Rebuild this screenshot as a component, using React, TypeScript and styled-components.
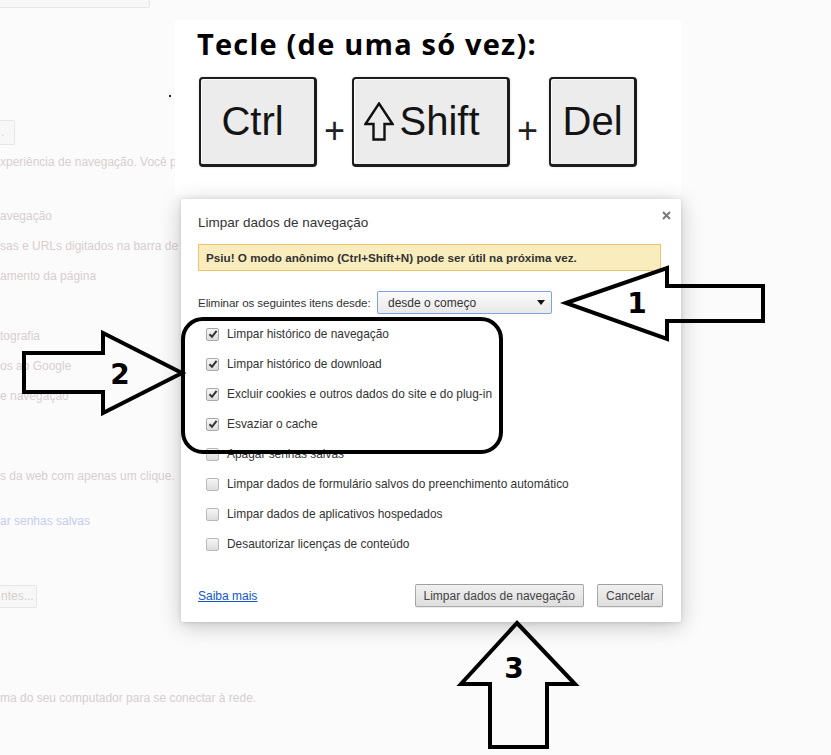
import * as React from 'react';
import styled, { createGlobalStyle } from 'styled-components';

const GlobalStyle = createGlobalStyle`
  html, body {
    margin: 0;
    padding: 0;
    background: #fbfbfb;
  }
  body {
    font-family: 'Liberation Sans', Arial, sans-serif;
  }
`;

const Page = styled.div`
  position: relative;
  display: flex;
  width: 831px;
  height: 755px;
  overflow: hidden;
  background: #fbfbfb;
`;

/* faded settings page behind the dialog */
const Backdrop = styled.div`
  display: flex;
  flex-direction: column;
  align-items: flex-start;
  width: 175px;
  flex: none;
  font-size: 12px;
  white-space: nowrap;
`;
const FadedLine = styled.div<{ $top: number; $link?: boolean }>`
  margin-top: ${p => p.$top}px;
  line-height: 20px;
  color: ${p => (p.$link ? '#c5cdf2' : '#d8cece')};
`;
const FadedButton = styled.div<{ $top: number; $width: number; $height: number; $cut?: boolean }>`
  margin-top: ${p => p.$top}px;
  width: ${p => p.$width}px;
  height: ${p => p.$height}px;
  box-sizing: border-box;
  border: 1px solid #e6e6e6;
  border-left: none;
  border-top: ${p => (p.$cut ? 'none' : '1px solid #e6e6e6')};
  border-radius: 0 2px 2px 0;
  background: #f7f7f7;
  color: #d8cece;
  font-size: 12px;
  line-height: ${p => p.$height - 2}px;
  padding-left: 1px;
`;

const Main = styled.div`
  position: relative;
  z-index: 1;
  display: flex;
  flex-direction: column;
  width: 506px;
  flex: none;
  padding-top: 20px;
`;
const Poster = styled.div`
  height: 175px;
  box-sizing: border-box;
  padding: 6px 0 0 22px;
  background: #fff;
`;
const Headline = styled.h1`
  margin: 0;
  font-family: 'Open Sans', 'Noto Sans', sans-serif;
  font-weight: 700;
  font-size: 29px;
  letter-spacing: 1.2px;
  line-height: 36px;
  white-space: nowrap;
  color: #000;
`;
const KeyRow = styled.div`
  display: flex;
  align-items: center;
  height: 90px;
  margin: 15px 0 0 2px;
`;
const Key = styled.div<{ $width: number; $shift?: number }>`
  display: flex;
  align-items: center;
  justify-content: center;
  gap: 6px;
  width: ${p => p.$width}px;
  height: 90px;
  box-sizing: border-box;
  padding-right: ${p => p.$shift ?? 0}px;
  border: 2px solid #1c1c1c;
  border-right-width: 3px;
  border-bottom-width: 3px;
  border-radius: 4px;
  background: #ececec;
  box-shadow: inset 1px 1px 0 #fbfbfb, 0 0 3px rgba(0, 0, 0, 0.12);
  font-family: 'Liberation Sans', Arial, sans-serif;
  font-size: 40px;
  color: #141414;
`;
const Plus = styled.span<{ $left: number; $right: number }>`
  margin: 18px ${p => p.$right}px 0 ${p => p.$left}px;
  font-family: 'Liberation Sans', Arial, sans-serif;
  font-weight: 300;
  font-size: 36px;
  line-height: 36px;
  color: #222;
`;

const Dialog = styled.div`
  display: flex;
  flex-direction: column;
  width: 500px;
  height: 423px;
  margin: 4px 0 0 6px;
  box-sizing: border-box;
  padding: 15px 20px 15px 17px;
  background: #fff;
  border-radius: 2px;
  box-shadow: 0 4px 22px rgba(0, 0, 0, 0.22), 0 1px 4px rgba(0, 0, 0, 0.12);
  color: #333;
  font-size: 12px;
`;
const Header = styled.div`
  display: flex;
  justify-content: space-between;
  align-items: flex-start;
  height: 18px;
`;
const Title = styled.div`
  font-size: 13.5px;
  line-height: 18px;
  color: #333;
`;
const Close = styled.button`
  margin: -3px -10px 0 0;
  padding: 0;
  width: 9px;
  height: 9px;
  border: none;
  background: none;
  display: flex;
`;
const Notice = styled.div`
  margin-top: 12px;
  height: 27px;
  box-sizing: border-box;
  padding: 0 7px;
  border: 1px solid #f0c36d;
  background: #f9edbe;
  font-weight: 700;
  font-size: 11.7px;
  line-height: 25px;
  white-space: nowrap;
  color: #333;
`;
const RangeRow = styled.div`
  display: flex;
  align-items: center;
  margin-top: 20px;
  height: 23px;
`;
const RangeLabel = styled.span`
  width: 179px;
  flex: none;
  font-size: 11.6px;
  letter-spacing: -0.1px;
  white-space: nowrap;
`;
const Select = styled.div`
  display: flex;
  align-items: center;
  justify-content: space-between;
  width: 175px;
  height: 23px;
  box-sizing: border-box;
  padding: 0 6px 0 10px;
  border: 1px solid #7da3e4;
  border-radius: 2px;
  background: linear-gradient(#fbfbfb, #e9e9e9);
  color: #333;
`;
const Caret = styled.span`
  width: 0;
  height: 0;
  border-left: 4.5px solid transparent;
  border-right: 4.5px solid transparent;
  border-top: 5px solid #111;
`;
const List = styled.div`
  display: flex;
  flex-direction: column;
  margin-top: 5px;
`;
const Option = styled.label`
  display: flex;
  align-items: center;
  gap: 8px;
  height: 30px;
  padding-left: 8px;
  font-size: 11.9px;
  white-space: nowrap;
  color: #333;
`;
const Box = styled.span<{ $checked: boolean }>`
  display: flex;
  align-items: center;
  justify-content: center;
  flex: none;
  width: 13px;
  height: 13px;
  box-sizing: border-box;
  border: 1px solid ${p => (p.$checked ? '#a9a9a9' : '#b9b9b9')};
  border-radius: 2px;
  background: linear-gradient(#f6f6f6, #dcdcdc);
`;
const Footer = styled.div`
  display: flex;
  align-items: center;
  gap: 13px;
  margin: 25px -2px 0 0;
  height: 23px;
`;
const Link = styled.a`
  margin-right: auto;
  color: #1155cc;
  text-decoration: underline;
`;
const Button = styled.button`
  height: 23px;
  padding: 0 8px;
  border: 1px solid rgba(0, 0, 0, 0.28);
  border-radius: 2px;
  background: linear-gradient(#f0f0f0, #dedede);
  box-shadow: 0 1px 0 rgba(0, 0, 0, 0.08);
  font-family: 'Liberation Sans', Arial, sans-serif;
  font-size: 12px;
  color: #444;
`;

const Annotations = styled.svg`
  position: absolute;
  left: 0;
  top: 0;
  z-index: 2;
  pointer-events: none;
`;
const Digit = styled.text`
  font-family: 'DejaVu Sans', sans-serif;
  font-weight: 700;
  font-size: 28px;
  fill: #000;
`;

const options = [
  { label: 'Limpar histórico de navegação', checked: true },
  { label: 'Limpar histórico de download', checked: true },
  { label: 'Excluir cookies e outros dados do site e do plug-in', checked: true },
  { label: 'Esvaziar o cache', checked: true },
  { label: 'Apagar senhas salvas', checked: false },
  { label: 'Limpar dados de formulário salvos do preenchimento automático', checked: false },
  { label: 'Limpar dados de aplicativos hospedados', checked: false },
  { label: 'Desautorizar licenças de conteúdo', checked: false },
];

const ShiftArrow = () => (
  <svg width="30" height="39" viewBox="0 0 30 39">
    <path d="M15 1.5 L28.5 22 L20.5 22 L20.5 37.5 L9.5 37.5 L9.5 22 L1.5 22 Z" fill="none" stroke="#111" strokeWidth="2.4" strokeLinejoin="miter" />
  </svg>
);

const Check = () => (
  <svg width="10" height="10" viewBox="0 0 10 10">
    <path d="M1.5 5.2 L4 7.8 L8.6 1.8" fill="none" stroke="#333" strokeWidth="2" />
  </svg>
);

export default function App() {
  return (
    <Page>
      <GlobalStyle />
      <Backdrop>
        <FadedButton $top={0} $width={150} $height={8} $cut />
        <FadedButton $top={112} $width={15} $height={25}>.</FadedButton>
        <FadedLine $top={7}>xperiência de navegação. Você po</FadedLine>
        <FadedLine $top={34}>avegação</FadedLine>
        <FadedLine $top={10}>sas e URLs digitados na barra de endereço</FadedLine>
        <FadedLine $top={10}>amento da página</FadedLine>
        <FadedLine $top={40}>tografia</FadedLine>
        <FadedLine $top={10}>os ao Google</FadedLine>
        <FadedLine $top={10}>e navegação</FadedLine>
        <FadedLine $top={60}>s da web com apenas um clique.</FadedLine>
        <FadedLine $top={25} $link>ar senhas salvas</FadedLine>
        <FadedButton $top={54} $width={37} $height={23}>ntes...</FadedButton>
        <FadedLine $top={80}>ma do seu computador para se conectar à rede.</FadedLine>
      </Backdrop>

      <Main>
        <Poster>
          <Headline>Tecle (de uma só vez):</Headline>
          <KeyRow>
            <Key $width={118} $shift={10}>Ctrl</Key>
            <Plus $left={7} $right={7}>+</Plus>
            <Key $width={158} $shift={18}>
              <ShiftArrow />
              Shift
            </Key>
            <Plus $left={7} $right={11}>+</Plus>
            <Key $width={88}>Del</Key>
          </KeyRow>
        </Poster>

        <Dialog>
          <Header>
            <Title>Limpar dados de navegação</Title>
            <Close aria-label="Fechar">
              <svg width="9" height="9" viewBox="0 0 9 9">
                <path d="M1 1 L8 8 M8 1 L1 8" stroke="#7a7a7a" strokeWidth="2" />
              </svg>
            </Close>
          </Header>
          <Notice>Psiu! O modo anônimo (Ctrl+Shift+N) pode ser útil na próxima vez.</Notice>
          <RangeRow>
            <RangeLabel>Eliminar os seguintes itens desde:</RangeLabel>
            <Select>
              desde o começo
              <Caret />
            </Select>
          </RangeRow>
          <List>
            {options.map(o => (
              <Option key={o.label}>
                <Box $checked={o.checked}>{o.checked && <Check />}</Box>
                {o.label}
              </Option>
            ))}
          </List>
          <Footer>
            <Link href="#">Saiba mais</Link>
            <Button>Limpar dados de navegação</Button>
            <Button>Cancelar</Button>
          </Footer>
        </Dialog>
      </Main>

      <Annotations width="831" height="755" viewBox="0 0 831 755">
        <rect x="169" y="95" width="2" height="2" fill="#222" />
        <rect x="183" y="319" width="318" height="133" rx="20" fill="none" stroke="#000" strokeWidth="4" />
        <polygon points="566,303 667,268 667,286 763,286 763,321 667,321 667,339" fill="none" stroke="#000" strokeWidth="4" />
        <Digit x="637" y="313" textAnchor="middle">1</Digit>
        <polygon points="24,353 103,353 103,333 182,373 103,413 103,392 24,392" fill="none" stroke="#000" strokeWidth="4" />
        <Digit x="120" y="384" textAnchor="middle">2</Digit>
        <polygon points="517,623 575,684 547,684 547,747 490,747 490,684 461,684" fill="none" stroke="#000" strokeWidth="4" />
        <Digit x="514" y="678" textAnchor="middle">3</Digit>
      </Annotations>
    </Page>
  );
}
